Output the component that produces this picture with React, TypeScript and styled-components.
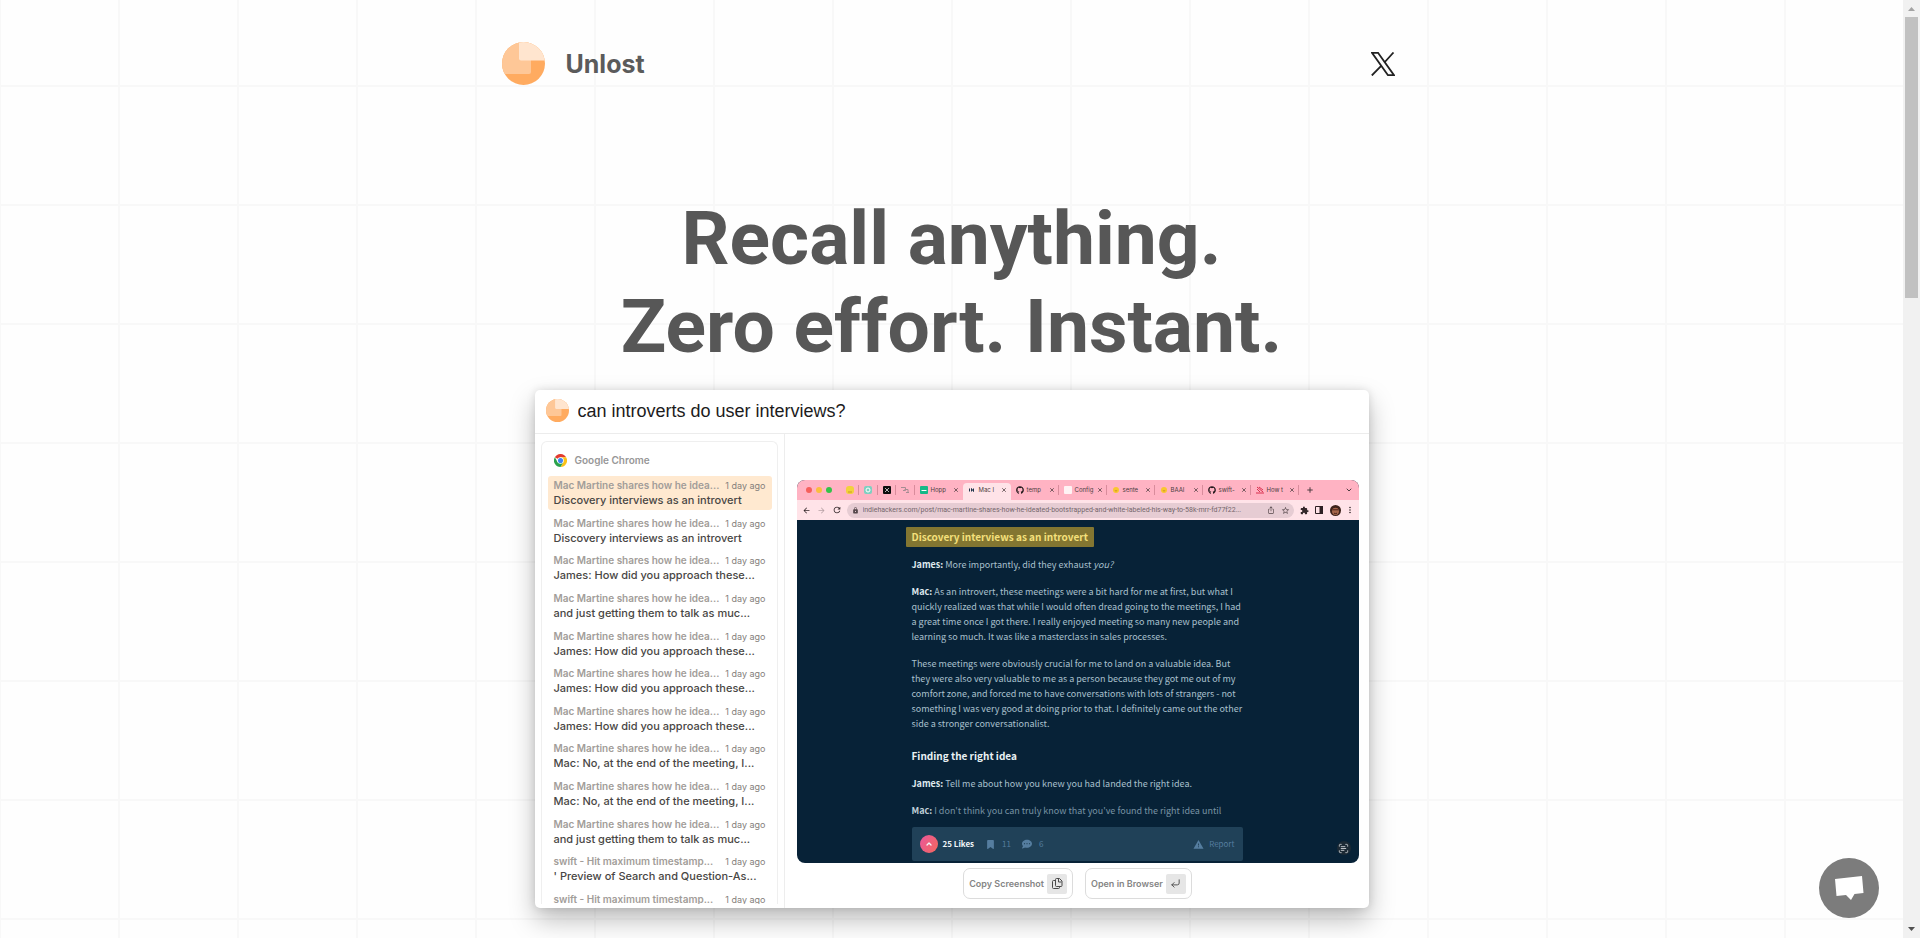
import React from "react";
import styled, { createGlobalStyle, css } from "styled-components";
import { FaGithub, FaBookmark, FaCommentDots } from "react-icons/fa6";
import {
  MdArrowBack,
  MdArrowForward,
  MdExtension,
  MdIosShare,
  MdLock,
  MdMoreVert,
  MdRefresh,
  MdStarBorder,
  MdWarning,
} from "react-icons/md";
import { ChevronDown, ChevronUp, CornerDownLeft, Plus, ScanText, X } from "lucide-react";

const ui = `Inter, "Liberation Sans", sans-serif`;
const reading = `"Noto Sans CJK SC", "Noto Sans", sans-serif`;

const GlobalStyle = createGlobalStyle`
  *, *::before, *::after { box-sizing: border-box; }
  body { margin: 0; background: #fefefe; color: #575757; font-family: ${ui}; }
  h1, h2, h3, p, ul { margin: 0; padding: 0; }
  ul { list-style: none; }
  button, input { font: inherit; color: inherit; border: 0; background: none; padding: 0; }
  button { cursor: pointer; }
  input { outline: 0; min-width: 0; }
  svg { display: block; flex: none; }
`;

/* ---------- page frame ---------- */

const Shell = styled.div`
  display: flex;
  min-height: 100vh;
`;

const Page = styled.div`
  flex: 1;
  min-width: 0;
  padding-bottom: 29px;
  background-color: #fefefe;
  background-image: linear-gradient(to right, #f8f8f8 2px, transparent 2px),
    linear-gradient(to bottom, #f8f8f8 2px, transparent 2px);
  background-size: 119px 119px;
  background-position: -1px -34px;
`;

const ScrollRail = styled.div`
  position: sticky;
  top: 0;
  width: 17px;
  height: 100vh;
  flex: none;
  display: flex;
  flex-direction: column;
  align-items: center;
  background: #f1f1f1;
`;

const RailArrow = styled.svg<{ $tone: string }>`
  width: 17px;
  height: 17px;
  fill: ${(p) => p.$tone};
`;

const RailThumb = styled.div`
  width: 13px;
  height: 30%;
  background: #c1c1c1;
  margin-bottom: auto;
`;

const Container = styled.header`
  max-width: 960px;
  margin: 0 auto;
  padding: 42px 30px 0;
  display: flex;
  align-items: center;
  justify-content: space-between;
`;

const Brand = styled.a`
  display: flex;
  align-items: center;
  gap: 21px;
  color: #5b5b5b;
  font-size: 25px;
  line-height: 32px;
  font-weight: 700;
  text-decoration: none;
`;

const SocialLink = styled.a`
  display: grid;
  place-items: center;
  width: 38px;
  height: 43px;
  color: #222;
`;

const Headline = styled.h1`
  margin: 109px 0 20px;
  text-align: center;
  font-family: Roboto, sans-serif;
  font-weight: 700;
  font-size: 75px;
  line-height: 88px;
  color: #575757;
`;

const ChatButton = styled.button`
  position: fixed;
  right: 41px;
  bottom: 20px;
  width: 60px;
  height: 60px;
  border-radius: 50%;
  display: grid;
  place-items: center;
  background: #7c7c7c;
`;

/* ---------- app window ---------- */

const AppWindow = styled.main`
  max-width: 834px;
  margin: 0 auto;
  border-radius: 5px;
  overflow: hidden;
  background: #fff;
  box-shadow: 0 12px 26px rgba(0, 0, 0, 0.26), 0 0 8px rgba(0, 0, 0, 0.12);
`;

const SearchBar = styled.label`
  display: flex;
  align-items: center;
  gap: 9px;
  height: 44px;
  padding: 0 11px 2px;
  border-bottom: 1px solid #ececec;
`;

const SearchInput = styled.input`
  flex: 1;
  font-family: "Liberation Sans", sans-serif;
  font-size: 18px;
  line-height: 24px;
  color: #1c1c1c;
`;

const WindowBody = styled.div`
  display: flex;
  height: 474px;
`;

const Sidebar = styled.aside`
  width: 250px;
  flex: none;
  display: flex;
  padding: 7px 6px 4px;
  border-right: 1px solid #ededed;
`;

const ResultCard = styled.section`
  flex: 1;
  min-width: 0;
  overflow: hidden;
  padding: 0 5px 0 6px;
  border: 1px solid #efefef;
  border-bottom: 0;
  border-radius: 6px 6px 0 0;
`;

const SourceTitle = styled.h2`
  display: flex;
  align-items: center;
  gap: 8px;
  height: 34px;
  padding: 2px 6px 0;
  font-size: 10px;
  line-height: 14px;
  font-weight: 600;
  color: #979797;
`;

const ResultList = styled.ul`
  display: flex;
  flex-direction: column;
  justify-content: space-between;
  height: 448px;
`;

const Result = styled.button<{ $active: boolean }>`
  display: grid;
  grid-template-columns: 1fr auto;
  width: 100%;
  height: 34px;
  padding: 3px 6px 1px;
  border-radius: 3px;
  text-align: left;
  background: ${(p) => (p.$active ? "#ffe9d0" : "transparent")};
`;

const ResultMeta = styled.span`
  font-size: 10px;
  line-height: 13px;
  font-weight: 600;
  color: #a29d99;
  white-space: nowrap;
`;

const ResultTime = styled.span`
  font-size: 9px;
  line-height: 13px;
  color: #85807c;
`;

const ResultText = styled.span`
  grid-column: 1 / -1;
  font-size: 11px;
  line-height: 17px;
  font-weight: 500;
  color: #484644;
  white-space: nowrap;
`;

const Preview = styled.section`
  flex: 1;
  min-width: 0;
  padding: 46px 10px 0 12px;
`;

const Actions = styled.div`
  display: flex;
  justify-content: center;
  gap: 12px;
  margin-top: 5px;
`;

const ActionButton = styled.button`
  display: flex;
  align-items: center;
  gap: 3px;
  height: 31px;
  padding: 0 5px;
  border: 1px solid #dcdcdc;
  border-radius: 7px;
  background: #fff;
  font-size: 9px;
  line-height: 12px;
  font-weight: 600;
  color: #858585;
`;

const KeyCap = styled.span`
  display: grid;
  place-items: center;
  width: 20px;
  height: 20px;
  border-radius: 2px;
  background: #e6e6e6;
  color: #4a4a4a;
`;

/* ---------- captured browser ---------- */

const Browser = styled.div`
  display: flex;
  flex-direction: column;
  height: 383px;
  border-radius: 8px;
  overflow: hidden;
  background: #072237;
  color: #4c3d40;
`;

const TabStrip = styled.div`
  display: flex;
  align-items: stretch;
  height: 20px;
  flex: none;
  background: #ffb3c3;
`;

const Lights = styled.div`
  display: flex;
  align-items: center;
  gap: 4px;
  width: 44px;
  padding-left: 9px;
`;

const Light = styled.i<{ $color: string }>`
  width: 6px;
  height: 6px;
  border-radius: 50%;
  background: ${(p) => p.$color};
`;

const divider = css`
  background-image: linear-gradient(#d98c9c, #d98c9c);
  background-size: 1px 10px;
  background-position: right center;
  background-repeat: no-repeat;
`;

const PinnedTabs = styled.div`
  display: flex;
  width: 74px;
`;

const PinnedTab = styled.button`
  flex: 1;
  display: grid;
  place-items: center;
  ${divider}
`;

const Tab = styled.button<{ $active?: boolean; $divided?: boolean }>`
  display: flex;
  align-items: center;
  gap: 3px;
  width: 48px;
  padding: 0 4px 0 5px;
  font-size: 6px;
  line-height: 10px;
  text-align: left;
  ${(p) => p.$divided && divider}
  ${(p) =>
    p.$active &&
    css`
      margin-top: 3px;
      padding-bottom: 3px;
      border-radius: 4px 4px 0 0;
      background: #ffe3e8;
    `}
`;

const TabLabel = styled.span`
  flex: 1;
  white-space: nowrap;
`;

const TabStripEnd = styled.div`
  flex: 1;
  display: flex;
  align-items: center;
  justify-content: space-between;
  padding: 0 6px 0 7px;
`;

const Toolbar = styled.div`
  display: flex;
  align-items: center;
  height: 20px;
  flex: none;
  padding: 0 5px;
  gap: 6px;
  background: #ffe3e8;
`;

const ToolGroup = styled.div`
  display: flex;
  align-items: center;
  gap: 6px;
`;

const ToolButton = styled.button<{ $faded?: boolean }>`
  display: grid;
  place-items: center;
  width: 9px;
  height: 10px;
  color: #33272a;
  opacity: ${(p) => (p.$faded ? 0.35 : 1)};
`;

const AddressBar = styled.label`
  flex: 1;
  display: flex;
  align-items: center;
  gap: 4px;
  height: 15px;
  padding: 0 4px 0 5px;
  border-radius: 8px;
  background: #e6ccd3;
  color: #54464a;
`;

const AddressInput = styled.input`
  flex: 1;
  font-family: Roboto, sans-serif;
  font-size: 7px;
  line-height: 10px;
  color: #75666b;
`;

const Viewport = styled.div`
  flex: 1;
  display: grid;
  grid-template-columns: 109px 1fr 22px;
  padding: 7px 0 2px 0;
  color: #a9c0cd;
`;

const Article = styled.article`
  grid-column: 2;
  width: 338px;
  padding-left: 6px;
  font-family: ${reading};
  font-size: 9px;
  line-height: 15px;
  white-space: nowrap;
`;

const Highlight = styled.h3`
  width: max-content;
  height: 20px;
  margin: 0 0 10px -6px;
  padding: 0 6px;
  border-radius: 1px;
  background: #837631;
  color: #f4e07c;
  font-size: 10px;
  line-height: 20px;
  font-weight: 700;
`;

const Subheading = styled.h3`
  margin: 17px 0 12px;
  font-size: 10px;
  line-height: 16px;
  font-weight: 700;
  color: #e9f1f4;
`;

const Paragraph = styled.p<{ $dim?: boolean }>`
  margin-bottom: ${(p) => (p.$dim ? 9 : 12)}px;
  ${(p) => p.$dim && "color: #7893a3;"}
  b {
    color: ${(p) => (p.$dim ? "#c0d0d9" : "#dfe9ee")};
  }
`;

const ReactionBar = styled.footer`
  display: flex;
  align-items: center;
  height: 34px;
  width: 331px;
  padding: 0 8px;
  border-radius: 2px;
  background: #204158;
  color: #557d9f;
  font-size: 8px;
  line-height: 12px;
`;

const LikeButton = styled.button`
  display: flex;
  align-items: center;
  gap: 5px;
  margin-right: 12px;
  font-weight: 700;
  color: #f0f5f8;
`;

const LikeBadge = styled.span`
  display: grid;
  place-items: center;
  width: 18px;
  height: 18px;
  border-radius: 50%;
  background: linear-gradient(120deg, #e9579c, #f4685c);
`;

const Stat = styled.button`
  display: flex;
  align-items: center;
  gap: 7px;
  margin-right: 11px;
`;

const Report = styled(Stat)`
  gap: 5px;
  margin: 0 0 0 auto;
`;

const ScanButton = styled.button`
  grid-column: 3;
  align-self: end;
  display: grid;
  place-items: center;
  width: 14px;
  height: 14px;
  margin-bottom: 6px;
  border-radius: 50%;
  background: #1c2a35;
  color: #c9ced2;
`;

/* ---------- drawings ---------- */

function Logo({ size }: { size: number }) {
  const id = `disc${size}`;
  return (
    <svg width={size} height={size} viewBox="0 0 43 43" aria-hidden="true">
      <defs>
        <clipPath id={id}>
          <circle cx="21.5" cy="21.5" r="21.5" />
        </clipPath>
      </defs>
      <g clipPath={`url(#${id})`}>
        <rect width="43" height="43" fill="#ffab60" />
        <path d="M0 0H29V30a2 2 0 0 1-2 2H0Z" fill="#fec797" />
        <path d="M17 0H43V18.500H19a2 2 0 0 1-2-2Z" fill="#ffe5cf" />
      </g>
    </svg>
  );
}

function ChromeMark() {
  return (
    <svg width="13" height="13" viewBox="0 0 24 24" aria-hidden="true">
      <path d="M12 12 1.600 6A12 12 0 0 1 22.400 6H12Z" fill="#e33b2e" />
      <path d="M12 12 12 6H22.400A12 12 0 0 1 12 24L17.200 15Z" fill="#fbc116" />
      <path d="M12 12 17.200 15 12 24A12 12 0 0 1 1.600 6L6.800 15Z" fill="#2ba24c" />
      <circle cx="12" cy="12" r="6" fill="#fff" />
      <circle cx="12" cy="12" r="4.700" fill="#4285f4" />
    </svg>
  );
}

function SquareMark({ fill, children, round = 1 }: { fill: string; children?: React.ReactNode; round?: number }) {
  return (
    <svg width="8" height="8" viewBox="0 0 8 8" aria-hidden="true">
      <rect width="8" height="8" rx={round} fill={fill} />
      {children}
    </svg>
  );
}

const SunMark = () => (
  <svg width="8" height="8" viewBox="0 0 8 8" aria-hidden="true">
    <circle cx="4" cy="4" r="3" fill="#f9c62f" />
    <path d="M2.800 4.500Q4 5.600 5.200 4.500" stroke="#b97c1c" strokeWidth="0.700" fill="none" />
  </svg>
);

const CopyMark = () => (
  <svg width="11" height="11" viewBox="0 0 11 11" fill="none" stroke="currentColor" strokeLinejoin="round" aria-hidden="true">
    <path d="M3.500 2.500H1.500a1 1 0 0 0-1 1V9.500a1 1 0 0 0 1 1H6.500a1 1 0 0 0 1-1V8.500" />
    <path d="M3.500 1.500a1 1 0 0 1 1-1H7.500L10 3V7.500a1 1 0 0 1-1 1H4.500a1 1 0 0 1-1-1Z" />
    <path d="M6.500 1V4H9.500" />
  </svg>
);

const AvatarMark = () => (
  <svg width="11" height="11" viewBox="0 0 11 11" aria-hidden="true">
    <circle cx="5.500" cy="5.500" r="5.500" fill="#3d231b" />
    <ellipse cx="5.500" cy="6.300" rx="3.500" ry="3.600" fill="#a5654a" />
    <path d="M2.500 4.800H8.500M4 8.200Q5.500 9 7 8.200" stroke="#3d1b14" strokeWidth="0.900" fill="none" />
  </svg>
);

const PanelMark = () => (
  <svg width="8" height="8" viewBox="0 0 8 8" aria-hidden="true">
    <path d="M.5.500H7.500V7.500H.5Z" fill="none" stroke="#2c2023" />
    <path d="M4.500 0H8V8H4.500Z" fill="#2c2023" />
  </svg>
);

/* ---------- data ---------- */

const MAC = "Mac Martine shares how he idea...";
const SWIFT = "swift - Hit maximum timestamp...";
const INTRO = "Discovery interviews as an introvert";
const JAMES = "James: How did you approach these...";
const TALK = "and just getting them to talk as muc...";
const NO = "Mac: No, at the end of the meeting, I...";

const results = [
  [MAC, INTRO],
  [MAC, INTRO],
  [MAC, JAMES],
  [MAC, TALK],
  [MAC, JAMES],
  [MAC, JAMES],
  [MAC, JAMES],
  [MAC, NO],
  [MAC, NO],
  [MAC, TALK],
  [SWIFT, "' Preview of Search and Question-As..."],
  [SWIFT, ""],
];

const pinned = [
  { name: "Notes", icon: <SquareMark fill="#f2d13c" round={3}><path d="M2 6H6" stroke="#c99a22" /></SquareMark> },
  { name: "Assistant", icon: <SquareMark fill="#7fd0c1" round={2}><circle cx="4" cy="4" r="2" fill="none" stroke="#fff" /></SquareMark> },
  { name: "X", icon: <SquareMark fill="#0d0d0d"><path d="M2 2 6 6M6 2 2 6" stroke="#fff" strokeWidth="0.700" /></SquareMark> },
  { name: "Links", icon: <svg width="8" height="8" viewBox="0 0 8 8" fill="none" stroke="#a58c92"><path d="M0 1.500H4.500V4.500H2M3.500 3.500H7V7M5 6.500H8" /></svg> },
];

const tabs = [
  { label: "Hopp", icon: <SquareMark fill="#16b887"><path d="M1.500 4.500H6.500" stroke="#fff" /></SquareMark> },
  { label: "Mac I", active: true, icon: <svg width="8" height="8" viewBox="0 0 8 8" fill="none" stroke="#1f364d"><path d="M1.500 2.500V5.500M3.500 5.500V2.500L5.500 5.500V2.500" /></svg> },
  { label: "temp", divided: true, icon: <FaGithub size={8} color="#24191c" /> },
  { label: "Config", divided: true, icon: <SquareMark fill="#fff3f4" /> },
  { label: "sente", divided: true, icon: <SunMark /> },
  { label: "BAAI", divided: true, icon: <SunMark /> },
  { label: "swift-", divided: true, icon: <FaGithub size={8} color="#24191c" /> },
  { label: "How t", divided: true, icon: <svg width="8" height="8" viewBox="0 0 8 8" stroke="#d9304f" fill="none"><path d="M1 1 7 6M3 1 7 4M1 3 4 6M0 7H8" /></svg> },
];

export default function App() {
  return (
    <>
      <GlobalStyle />
      <Shell>
        <Page>
          <Container>
            <Brand href="#home">
              <Logo size={43} />
              Unlost
            </Brand>
            <SocialLink href="#x" aria-label="X">
              <svg width="24" height="24" viewBox="0 0 24 24" fill="none" stroke="currentColor" aria-hidden="true">
                <path d="M1 .8H7L23 23.200H17Z" strokeWidth="1.800" />
                <path d="M22.500.5 13.400 10.500M10.200 13.800 .8 23.500" strokeWidth="1.800" />
              </svg>
            </SocialLink>
          </Container>

          <Headline>
            Recall anything.
            <br />
            Zero effort. Instant.
          </Headline>

          <AppWindow>
            <SearchBar>
              <Logo size={23} />
              <SearchInput aria-label="Search" defaultValue="can introverts do user interviews?" />
            </SearchBar>
            <WindowBody>
              <Sidebar>
                <ResultCard>
                  <SourceTitle>
                    <ChromeMark />
                    Google Chrome
                  </SourceTitle>
                  <ResultList>
                    {results.map(([meta, text], i) => (
                      <li key={i}>
                        <Result $active={i === 0}>
                          <ResultMeta>{meta}</ResultMeta>
                          <ResultTime>1 day ago</ResultTime>
                          <ResultText>{text}</ResultText>
                        </Result>
                      </li>
                    ))}
                  </ResultList>
                </ResultCard>
              </Sidebar>

              <Preview>
                <Browser>
                  <TabStrip>
                    <Lights>
                      <Light $color="#f65f5c" />
                      <Light $color="#fbbd3e" />
                      <Light $color="#33c24a" />
                    </Lights>
                    <PinnedTabs>
                      {pinned.map((p) => (
                        <PinnedTab key={p.name} aria-label={p.name}>
                          {p.icon}
                        </PinnedTab>
                      ))}
                    </PinnedTabs>
                    {tabs.map((t) => (
                      <Tab key={t.label} $active={t.active} $divided={t.divided}>
                        {t.icon}
                        <TabLabel>{t.label}</TabLabel>
                        <X size={6} strokeWidth={3} />
                      </Tab>
                    ))}
                    <TabStripEnd>
                      <Plus size={8} strokeWidth={3} />
                      <ChevronDown size={8} strokeWidth={3} />
                    </TabStripEnd>
                  </TabStrip>

                  <Toolbar>
                    <ToolGroup>
                      <ToolButton aria-label="Back"><MdArrowBack size={9} /></ToolButton>
                      <ToolButton aria-label="Forward" $faded><MdArrowForward size={9} /></ToolButton>
                      <ToolButton aria-label="Reload"><MdRefresh size={10} /></ToolButton>
                    </ToolGroup>
                    <AddressBar>
                      <MdLock size={7} />
                      <AddressInput
                        aria-label="Address"
                        defaultValue="indiehackers.com/post/mac-martine-shares-how-he-ideated-bootstrapped-and-white-labeled-his-way-to-58k-mrr-fd77f22..."
                      />
                      <ToolGroup>
                        <MdIosShare size={8} />
                        <MdStarBorder size={9} />
                      </ToolGroup>
                    </AddressBar>
                    <ToolGroup>
                      <ToolButton aria-label="Extensions"><MdExtension size={9} /></ToolButton>
                      <ToolButton aria-label="Side panel"><PanelMark /></ToolButton>
                      <ToolButton aria-label="Profile"><AvatarMark /></ToolButton>
                      <ToolButton aria-label="Menu"><MdMoreVert size={10} /></ToolButton>
                    </ToolGroup>
                  </Toolbar>

                  <Viewport>
                    <Article>
                      <Highlight>Discovery interviews as an introvert</Highlight>
                      <Paragraph>
                        <b>James:</b> More importantly, did they exhaust <em>you?</em>
                      </Paragraph>
                      <Paragraph>
                        <b>Mac:</b> As an introvert, these meetings were a bit hard for me at first, but what I
                        <br />
                        quickly realized was that while I would often dread going to the meetings, I had
                        <br />
                        a great time once I got there. I really enjoyed meeting so many new people and
                        <br />
                        learning so much. It was like a masterclass in sales processes.
                      </Paragraph>
                      <Paragraph>
                        These meetings were obviously crucial for me to land on a valuable idea. But
                        <br />
                        they were also very valuable to me as a person because they got me out of my
                        <br />
                        comfort zone, and forced me to have conversations with lots of strangers - not
                        <br />
                        something I was very good at doing prior to that. I definitely came out the other
                        <br />
                        side a stronger conversationalist.
                      </Paragraph>
                      <Subheading>Finding the right idea</Subheading>
                      <Paragraph>
                        <b>James:</b> Tell me about how you knew you had landed the right idea.
                      </Paragraph>
                      <Paragraph $dim>
                        <b>Mac:</b> I don't think you can truly know that you've found the right idea until
                      </Paragraph>
                      <ReactionBar>
                        <LikeButton>
                          <LikeBadge><ChevronUp size={8} strokeWidth={4} /></LikeBadge>
                          25 Likes
                        </LikeButton>
                        <Stat><FaBookmark size={9} />11</Stat>
                        <Stat><FaCommentDots size={10} />6</Stat>
                        <Report><MdWarning size={11} />Report</Report>
                      </ReactionBar>
                    </Article>
                    <ScanButton aria-label="Scan text">
                      <ScanText size={11} />
                    </ScanButton>
                  </Viewport>
                </Browser>

                <Actions>
                  <ActionButton>
                    Copy Screenshot
                    <KeyCap><CopyMark /></KeyCap>
                  </ActionButton>
                  <ActionButton>
                    Open in Browser
                    <KeyCap><CornerDownLeft size={11} /></KeyCap>
                  </ActionButton>
                </Actions>
              </Preview>
            </WindowBody>
          </AppWindow>
        </Page>

        <ScrollRail aria-hidden="true">
          <RailArrow $tone="#a3a3a3" viewBox="0 0 17 17"><path d="M5 11 8.500 7 12 11Z" /></RailArrow>
          <RailThumb />
          <RailArrow $tone="#505050" viewBox="0 0 17 17"><path d="M5 6H12L8.500 10Z" /></RailArrow>
        </ScrollRail>
      </Shell>

      <ChatButton aria-label="Open chat">
        <svg width="30" height="26" viewBox="0 0 30 26" fill="#fff" aria-hidden="true">
          <path d="M1 4 28 1 29.500 18 20.500 19 17 25 12 20 2.500 21Z" />
        </svg>
      </ChatButton>
    </>
  );
}
